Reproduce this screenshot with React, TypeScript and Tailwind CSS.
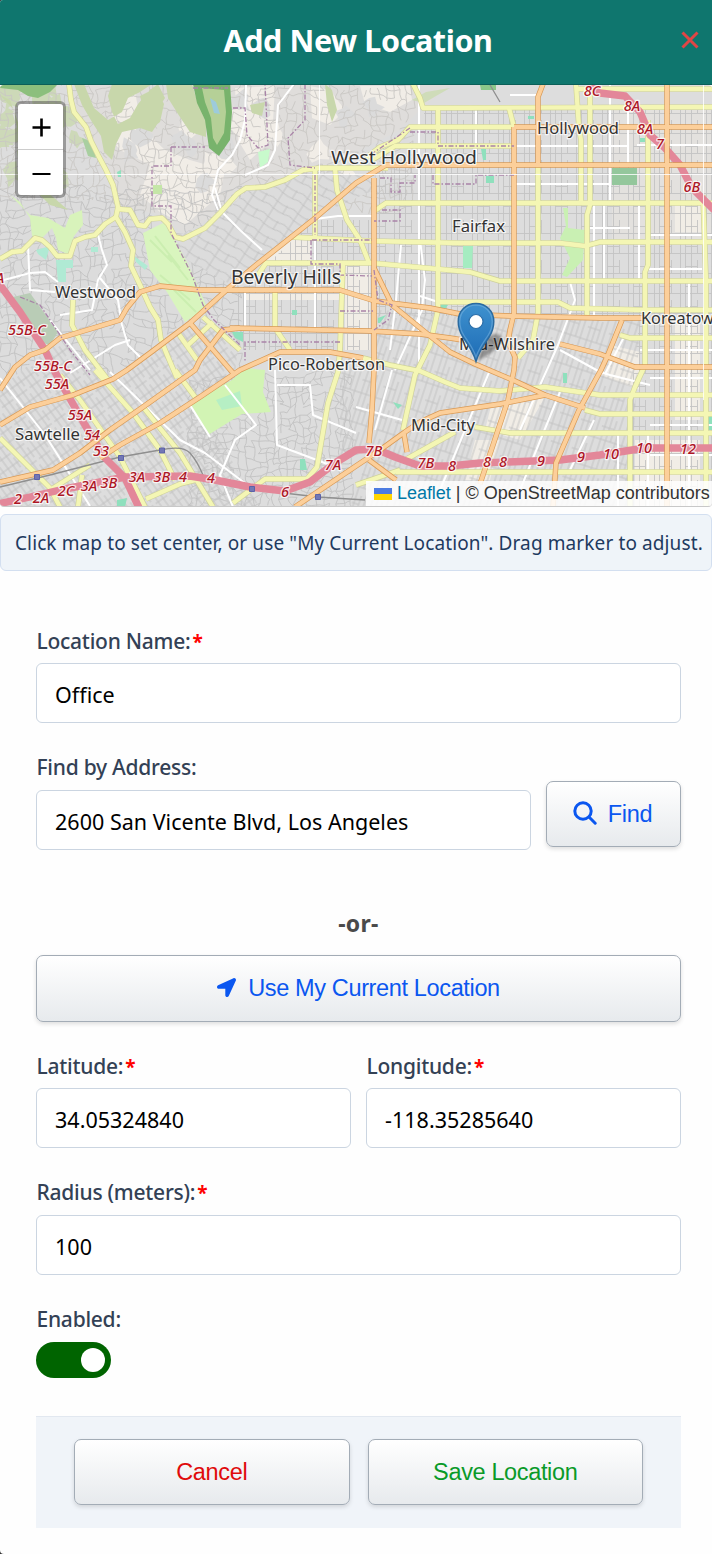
import type { ReactNode } from "react";
import { FaLocationArrow } from "react-icons/fa";

const UI = "font-['Noto_Sans','Open_Sans',sans-serif]";
const ARIAL = "font-['Liberation_Sans',Arial,sans-serif]";

/* ---------- map data ---------- */

function seeded(seed: number) {
  let s = seed;
  return () => {
    s = (s * 16807) % 2147483647;
    return s / 2147483647;
  };
}

// Irregular street mesh: a jittered grid with some of its edges left out.
function mesh(seed: number, x0: number, y0: number, w: number, h: number, cell: number, keep: number) {
  const rnd = seeded(seed);
  const cols = Math.ceil(w / cell) + 1;
  const rows = Math.ceil(h / cell) + 1;
  const pts: [number, number][][] = [];
  for (let r = 0; r < rows; r++) {
    const row: [number, number][] = [];
    for (let c = 0; c < cols; c++) {
      const bend = Math.sin(c * 0.55 + r * 0.2) * cell * 0.5;
      row.push([x0 + c * cell + (rnd() - 0.5) * cell * 0.8, y0 + r * cell + bend + (rnd() - 0.5) * cell * 0.8]);
    }
    pts.push(row);
  }
  let d = "";
  const edge = (a: [number, number], b: [number, number]) => {
    const mx = (a[0] + b[0]) / 2 + (rnd() - 0.5) * cell * 0.6;
    const my = (a[1] + b[1]) / 2 + (rnd() - 0.5) * cell * 0.6;
    d += `M${a[0].toFixed(1)} ${a[1].toFixed(1)}Q${mx.toFixed(1)} ${my.toFixed(1)} ${b[0].toFixed(1)} ${b[1].toFixed(1)}`;
  };
  for (let r = 0; r < rows; r++) {
    for (let c = 0; c < cols; c++) {
      if (c + 1 < cols && rnd() < keep) edge(pts[r][c], pts[r][c + 1]);
      if (r + 1 < rows && rnd() < keep) edge(pts[r][c], pts[r + 1][c]);
    }
  }
  return d;
}

function blobs(seed: number, count: number, x0: number, y0: number, w: number, h: number, r: number) {
  const rnd = seeded(seed);
  let d = "";
  for (let i = 0; i < count; i++) {
    const x = x0 + rnd() * w;
    const y = y0 + rnd() * h;
    for (let k = 0; k < 9; k++) {
      const a = (k / 9) * 6.28;
      const q = r * (0.4 + rnd());
      d += `${k ? "L" : "M"}${(x + Math.cos(a) * q).toFixed(1)} ${(y + Math.sin(a) * q * 1.2).toFixed(1)}`;
    }
    d += "Z";
  }
  return d;
}

const HILL_LINES = mesh(77, 0, 84, 410, 120, 7, 0.62);
const WEST_LINES = mesh(191, 0, 190, 240, 190, 8, 0.8);
const LOW_LINES = mesh(53, 190, 375, 160, 130, 7, 0.8);

const YELLOW = [
  "M69 84L71 100L74 112L86 127L91 141L98 155L106 170L113 185L118 207L116 217L125 232L133 250L131 266L140 285L150 307L158 320L161 340L168 357L177 378",
  "M0 259L12 252L22 251L35 238L42 240L50 247L57 256L70 256L75 241L85 237L95 235L105 224L116 217",
  "M118 209L130 210L138 225L145 226L150 219L162 218L168 224L175 237L183 239L205 228L220 213L237 194L246 188L265 187L285 180L303 170L320 168L388 168",
  "M413 84L420 98L423 108L712 107",
  "M438 108V310L430 345L415 375L403 430",
  "M366 158L380 147L398 140L410 127H514",
  "M372 160L395 146H514",
  "M509 108L514 127",
  "M576 84L579 128L581 140V203",
  "M590 84V205L587 215V315",
  "M576 89H625L712 89",
  "M538 165V313L533 340L518 358",
  "M648 120V265L645 272V365L635 387L630 400V507",
  "M703 195L706 280V507",
  "M373 212L386 203H712",
  "M290 237L372 241L460 243H560L585 246L600 242H712",
  "M258 275L266 263L372 263L470 272L500 281H712",
  "M438 302H558L570 308L645 310H712",
  "M620 335L630 338H712",
  "M275 290V328L290 350",
  "M343 262L340 350L338 372L328 403L317 467L307 479H265L233 503",
  "M315 168V238",
  "M335 168L337 190L347 220L360 240L369 263",
  "M363 358L390 365L420 371L445 382L460 388L500 391L545 387L600 395H712",
  "M585 410L600 414H712",
  "M475 427L510 433H712",
  "M396 472H712",
  "M405 460L455 432",
  "M356 485L400 470",
  "M60 375L80 400L120 457L145 507",
  "M95 370L133 413L160 450L175 480",
  "M143 407L180 453L213 507",
  "M0 438L50 488L60 507",
  "M90 465L50 490",
  "M82 475L78 507",
  "M146 499L180 484L200 479",
  "M73 300L72 325L85 350L108 380",
  "M178 333L197 360",
  "M187 346L213 322",
  "M203 317L240 350",
  "M175 370L195 397",
];

const ORANGE = [
  "M712 165H386L356 183L314 219L256 265L231 286L190 323L150 353L127 370L113 379L73 395L30 407L0 425",
  "M0 390L15 367L30 355L45 350L60 338L120 320L127 308L140 292L160 286L200 290H340L375 301L430 308L460 314L510 316L600 318H648",
  "M190 323L233 373",
  "M230 328L370 331L420 334L450 338L475 342",
  "M240 328L223 330L213 343L200 360L195 370L143 407L110 430L80 453L53 470L0 482",
  "M363 358L330 352H280L240 370L200 397L160 423L120 445L100 458",
  "M374 178V370L372 410L369 443",
  "M374 268L392 305L430 336L450 352L475 364L515 381L545 395L585 408",
  "M369 460L396 480",
  "M545 395L500 404L440 413L420 422L405 432L380 450L356 466L295 507",
  "M404 434L407 452",
  "M514 127V313L510 330L508 342L515 357L514 370L508 400L489 457L480 484",
  "M560 344L600 354L635 367H712",
  "M622 320L607 357L601 370L579 410L556 463L553 507",
  "M543 84L538 97V165",
  "M514 127H712",
  "M667 84V507",
];

const WHITE = [
  "M246 84L245 120L240 140L232 155L218 170L212 195L218 210",
  "M294 84L278 105L275 150L268 165L245 175",
  "M215 188L222 212L240 230L262 250",
  "M28 245L30 290L55 292",
  "M98 235L102 250L107 265L98 280L92 310L60 315",
  "M100 278L118 300L122 325L128 345L140 357",
  "M0 281L30 273L45 272L58 282",
  "M50 320L90 370",
  "M70 373L115 345L130 340",
  "M0 378L45 435L90 506",
  "M110 372L180 440L205 453L250 487",
  "M190 405L210 437",
  "M225 385L256 425L235 440L220 475L233 507",
  "M275 370L277 445L330 465",
  "M277 385H310L313 415L356 433",
  "M315 240V330",
  "M245 290V328",
  "M315 219L338 216H373",
  "M419 84V365",
  "M401 245L396 300L390 350",
  "M420 240L425 280L422 310L395 370",
  "M420 296L438 302",
  "M476 108V165",
  "M510 95H540",
  "M610 84V200",
  "M628 95V165",
  "M514 146H627",
  "M516 184H610",
  "M637 145H712",
  "M594 205V315",
  "M604 205V280",
  "M639 205V280",
  "M590 228H630",
  "M650 235H712",
  "M648 269H702",
  "M689 282V507",
  "M570 282L575 300L558 345L520 430",
  "M640 350H712",
  "M560 350L600 372L610 375L650 385",
  "M625 335L605 374",
  "M356 407L402 420",
  "M392 370L375 430",
  "M490 370L440 490",
  "M560 392L520 490",
  "M594 420L570 470",
  "M650 378H712",
  "M650 425H712M650 455H712",
  "M618 434V507M648 434V507",
];

const PURPLE = [
  "M171 147V166H152V206H171V233L182 255L192 275L203 305L214 320L240 345",
  "M171 147H205",
  "M233 108H245L247 135L258 148L268 145L265 84",
  "M305 84V120L288 138L290 165L315 168",
  "M315 175V235",
  "M311 240V264H340V275L372 276",
  "M312 240L372 240",
  "M380 178H391V192H400V183H415V175M433 175V184H476V175H514",
  "M410 128L370 155",
  "M410 132H438V146H514",
  "M374 270L378 300L392 305L388 320L374 330",
  "M340 311H373M340 342H245V362",
  "M382 210H400V221H374",
  "M20 297L40 305L70 350L90 375",
  "M193 88H228",
];

const RED = [
  "M-3 281L20 312L45 350L55 372L65 390L85 425L105 458L125 478L140 510",
  "M-2 504L30 497L60 490L100 482L125 477L190 476L215 480L250 487L285 491L310 482L335 463L356 450L376 449L395 457L420 466L450 466L480 463L560 460L600 455L645 448H714",
  "M588 84L600 93L625 96L640 112L650 135L665 148L680 165L692 188L714 210",
];

const PLACES: [string, number, number, number, number][] = [
  ["West Hollywood", 331, 164, 146, 18],
  ["Hollywood", 537, 134, 82, 16.5],
  ["Fairfax", 452, 232, 53, 16.5],
  ["Beverly Hills", 231, 284, 110, 19],
  ["Westwood", 55, 298, 81, 16.5],
  ["Pico-Robertson", 268, 370, 117, 16.5],
  ["Mid-City", 411, 431, 64, 16.5],
  ["Sawtelle", 15, 440, 65, 16.5],
  ["Mid-Wilshire", 459, 350, 96, 16.5],
  ["Koreatown", 641, 324, 83, 16.5],
];

const EXITS: [string, number, number][] = [
  ["55B-C", 27, 335], ["55B-C", 53, 371], ["55A", 57, 389], ["55A", 80, 420], ["54", 92, 440], ["53", 101, 456],
  ["2", 18, 504], ["2A", 41, 503], ["2C", 66, 496], ["3A", 89, 491], ["3B", 109, 488], ["3A", 137, 482], ["3B", 162, 482],
  ["4", 183, 482], ["4", 211, 483], ["6", 285, 497], ["7A", 333, 470], ["7B", 374, 456], ["7B", 426, 468], ["8", 452, 471],
  ["8", 487, 467], ["8", 503, 467], ["9", 541, 466], ["9", 581, 462], ["10", 611, 459], ["10", 644, 453], ["12", 688, 454],
  ["8C", 592, 96], ["8A", 632, 111], ["8A", 645, 134], ["7", 660, 149], ["6B", 692, 192], ["A", 0, 283],
];

const GREENS_HILL =
  "M74 84L82 105L92 122L101 136L104 152L112 160L116 144L122 132L140 128L152 132L160 120L156 112L165 98L158 84L150 90L138 104L130 118L118 124L112 112L108 96L112 84ZM84 84H152L140 92L128 98L122 112L108 120L94 108ZM140 96L144 112L140 122L150 130L160 122L164 104L156 88ZM166 84L168 98L178 114L190 132L206 137L206 122L198 104L192 84ZM0 95L14 110L18 135L28 165L35 190L50 205L68 210L45 190L32 160L20 128L10 100Z";

function MapDrawing() {
  return (
    <svg className="block h-[422px] w-full" viewBox="0 85 712 422" preserveAspectRatio="none" aria-hidden="true">
      <defs>
        <pattern id="gridEast" width="26" height="20" patternUnits="userSpaceOnUse">
          <path d="M4.500 0V20M9.500 0V20M15.500 0V20M21.500 0V13M0 13.500H26M9 6.500H21" stroke="#c3c3c3" strokeWidth="0.9" fill="none" />
        </pattern>
        <pattern id="gridSouth" width="22" height="30" patternUnits="userSpaceOnUse" patternTransform="rotate(18)">
          <path d="M3 0V30M8 0V30M13 0V22M18 0V30M0 9H13M0 22H22" stroke="#c1c1c1" strokeWidth="0.9" fill="none" />
        </pattern>
        <pattern id="gridWest" width="17" height="21" patternUnits="userSpaceOnUse" patternTransform="rotate(-36)">
          <path d="M3 0V21M9 0V21M14 0V12M0 6H17M0 16H14" stroke="#c0c0c0" strokeWidth="0.9" fill="none" />
        </pattern>
        <pattern id="gridHills" width="24" height="18" patternUnits="userSpaceOnUse" patternTransform="rotate(32)">
          <path d="M0 4Q12 8 24 4M0 12Q12 16 24 12M6 0V18M17 4V14" stroke="#c2c2c2" strokeWidth="0.9" fill="none" />
        </pattern>
        <linearGradient id="pin" x1="0" y1="0" x2="0" y2="1">
          <stop offset="0" stopColor="#3f92cf" />
          <stop offset="1" stopColor="#1d6bb5" />
        </linearGradient>
        <filter id="soft" x="-50%" y="-50%" width="200%" height="200%">
          <feGaussianBlur stdDeviation="1.8" />
        </filter>
      </defs>

      <rect x="0" y="85" width="712" height="422" fill="#dddddd" />
      <path d="M0 85H450L420 110L400 130L330 165L230 205L185 235L160 215L118 205L105 165L72 110V85Z" fill="#dfdddb" />
      <path d="M118 100L135 92L142 128L165 150L190 160L225 170L220 195L185 225L160 212L140 195L150 165L120 150L112 140ZM235 88L275 86L272 140L250 160L238 140ZM310 86L330 90L345 110L330 125L312 118ZM360 86H410L412 100L390 112L365 104Z" fill="#f1ede7" />
      <path d={blobs(9, 9, 120, 90, 230, 90, 10)} fill="#f1ede7" />
      <path d={blobs(27, 16, 130, 95, 270, 100, 9)} fill="#dbdbdb" />
      <path d={blobs(4, 26, 0, 90, 76, 90, 9)} fill="#cdd9b8" />
      <path d="M385 108H712V240H612V108Z" fill="#ebe6df" opacity="0.45" />
      <path d="M280 240H311V263H262ZM245 292H340V300H245ZM345 264H370V350H345ZM492 402L545 397L520 440L485 430ZM610 345L640 352V390L600 375ZM675 320H700V420H675ZM675 205H702V232H675ZM475 440L500 440L490 480L465 480ZM635 440H700V507H635Z" fill="#f1ede6" />

      <path d={HILL_LINES} stroke="#c9c7c4" strokeWidth="0.9" fill="none" />
      <path d="M0 200H110L120 210L170 240L185 240L232 205V290L190 323L110 380L60 345L0 350Z" fill="#dcdcdc" />
      <path d={WEST_LINES} stroke="#c2c2c2" strokeWidth="0.9" fill="none" />
      <path d="M374 190L314 217L232 285L190 262L170 240L225 212L246 192L300 175H374Z" fill="#dcdcdc" />
      <path d="M374 190L314 217L232 285L190 262L170 240L225 212L246 192L300 175H374Z" fill="url(#gridHills)" />
      <path d="M374 168H712V316H374ZM424 110H712V168H424ZM232 290H374V350H232ZM314 220H374V290H240Z" fill="url(#gridEast)" />
      <path d="M640 318H712V507H630V400Z" fill="url(#gridEast)" />
      <path d="M374 310L640 320L630 507H350L374 440ZM340 355L374 365V450L340 460Z" fill="url(#gridSouth)" />
      <path d="M0 388L60 340L110 382L150 355L190 325L240 330L235 372L195 400L260 507H0Z" fill="#dddddd" />
      <path d="M0 388L60 340L110 382L150 355L190 325L240 330L235 372L195 400L260 507H0Z" fill="url(#gridWest)" />
      <path d={LOW_LINES} stroke="#c2c2c2" strokeWidth="0.9" fill="none" />

      <path d={GREENS_HILL} fill="#c8d7ab" />
      <path d="M325 84L332 90L337 110L332 122L327 105ZM250 105L265 102L262 116L252 113Z" fill="#c8d7ab" />
      <path d="M0 84H58L50 92L38 98L28 96L18 90L0 88Z" fill="#8cbf7d" />
      <path d="M82 138L92 142L96 158L88 156Z" fill="#a9cfa0" />
      <path d="M193 84L230 84L232 112L230 140L219 156L209 148L205 120L197 103Z" fill="#78b36c" />
      <path d="M202 88L224 90L226 112L224 133L217 145L213 138L211 118L205 102Z" fill="#b5d097" />
      <path d="M210 98L216 102L220 114L214 113Z" fill="#9dcbdb" />
      <path d="M258 152L270 149L268 162L260 168Z" fill="#c8facc" />
      <path d="M10 195L20 202L30 218L32 236L42 238L52 228L56 238L58 250L68 254L74 236L83 225L82 210L70 215L65 228L48 218L30 215Z" fill="#d8f3bb" />
      <path d="M143 233L165 222L175 240L187 262L207 307L185 322L167 292L150 270Z" fill="#d9f5be" />
      <path d="M150 240L172 262M155 236L180 268M160 275L190 300M168 255L188 280M174 290L196 312" stroke="#cbeeb0" strokeWidth="2" />
      <path d="M190 403L232 380L245 368L265 370L263 392L271 412L242 414L208 435Z" fill="#d2f4b4" />
      <path d="M216 400L240 391L242 406L222 410Z" fill="#b6efc4" />
      <path d="M13 297L30 293L58 332L50 345L40 342Z" fill="#b9ccb6" />
      <path d="M563 208H568V228L585 230L583 260L567 277L562 275L570 258L560 238L566 226Z" fill="#c9f0b3" />
      <path d="M463 246H473L472 268H463Z" fill="#a5ecc1" />
      <path d="M36 250L50 246L46 260L38 254ZM56 260H73V268H66V282H58ZM134 256L148 266L145 270L136 262ZM91 247H98V252H91Z" fill="#b0ead4" />
      <path d="M153 185H162V194H153Z" fill="#c5e6a8" />
      <path d="M612 168H637V185H612Z" fill="#94c79c" />
      <path d="M486 176H494V183H486ZM481 149H486V160H483ZM528 116H534V119H528ZM640 138H645V142H640ZM440 300L448 305L445 309L437 309ZM292 310H297V315H292ZM232 332H243V342L235 338ZM378 318L386 315L380 323H378ZM117 172L121 170V177H118ZM393 402L402 405L398 409ZM563 373H567V383H563ZM117 500L127 498L125 507H117ZM300 459H305L307 470H300ZM706 415H712V430H706Z" fill="#8fe0bd" />
      <path d="M480 85H496V90H481Z" fill="#8cc78a" />
      <path d="M412 100L426 92L450 88L436 96L424 103Z" fill="#cbdcb0" opacity="0.8" />

      <g fill="none" stroke="#ffffff" strokeLinejoin="round" strokeWidth="2">
        {WHITE.map((d) => <path key={d} d={d} />)}
      </g>
      <g fill="none" stroke="#cfd29a" strokeLinejoin="round" strokeWidth="5.600">
        {YELLOW.map((d) => <path key={d} d={d} />)}
      </g>
      <g fill="none" stroke="#f4f6b4" strokeLinejoin="round" strokeWidth="4.300">
        {YELLOW.map((d) => <path key={d} d={d} />)}
      </g>
      <path d="M0 487L50 475L120 457L160 450Q183 445 190 453T203 475Q212 484 250 489L318 497L365 500M490 85L500 102" stroke="#8f8f8f" strokeWidth="1.300" fill="none" />
      <g fill="none" stroke="#e38799" strokeLinejoin="round" strokeWidth="7.400">
        {RED.map((d) => <path key={d} d={d} />)}
      </g>
      <g fill="none" stroke="#d99a56" strokeLinejoin="round" strokeWidth="5.400">
        {ORANGE.map((d) => <path key={d} d={d} />)}
      </g>
      <g fill="none" stroke="#fccf9a" strokeLinejoin="round" strokeWidth="4">
        {ORANGE.map((d) => <path key={d} d={d} />)}
      </g>
      <g fill="none" stroke="#a983a8" strokeWidth="1.300" strokeDasharray="5 2 1.5 2">
        {PURPLE.map((d) => <path key={d} d={d} />)}
      </g>
      <path d="M34.500 474.500h5v5h-5zM118.500 455.500h5v5h-5zM159.500 448h5v5h-5zM249.500 486.500h5v5h-5zM315.500 494.500h5v5h-5z" fill="#7277b5" stroke="#5c62a8" />

      <g className="font-['Noto_Sans',sans-serif]" fill="#333333" stroke="#ffffff" strokeOpacity="0.75" strokeWidth="2.500" strokeLinejoin="round" paintOrder="stroke">
        {PLACES.map(([name, x, y, w, size]) => (
          <text key={name} x={x} y={y} fontSize={size} textLength={w} lengthAdjust="spacingAndGlyphs">{name}</text>
        ))}
      </g>
      <g className="font-['Noto_Sans',sans-serif] italic" fill="#ad1626" stroke="#ffffff" strokeOpacity="0.8" strokeWidth="2.500" strokeLinejoin="round" paintOrder="stroke" fontSize="14.500" fontWeight="500" textAnchor="middle">
        {EXITS.map(([name, x, y]) => (
          <text key={`${name}-${x}`} x={x} y={y}>{name}</text>
        ))}
      </g>

      <path d="M0 174.500H712M319.500 85V174M703.500 85V400" stroke="#ffffff" strokeWidth="0.900" opacity="0.9" />

      <path d="M477 361L486 338Q498 330 502 338Q500 350 477 361Z" fill="#000000" opacity="0.35" filter="url(#soft)" />
      <path d="M476 361.500C473 351 468 345 462.500 336.500C459.500 331.500 458.200 327 458.200 321.500C458.200 311 466 303.500 476 303.500C486 303.500 493.800 311 493.800 321.500C493.800 327 492.500 331.500 489.500 336.500C484 345 479 351 476 361.500Z" fill="url(#pin)" stroke="#2a6a9f" strokeWidth="1.400" />
      <path d="M476 357C473 348 469 343 464 335.500C461 331 459.800 326.500 459.800 321.500C459.800 312 467 305.100 476 305.100C485 305.100 492.200 312 492.200 321.500C492.200 326.500 491 331 488 335.500C483 343 479 348 476 357Z" fill="none" stroke="#7fb7e2" strokeOpacity="0.5" strokeWidth="1.300" />
      <circle cx="476" cy="321.500" r="7" fill="#ffffff" stroke="#2b6ea8" strokeWidth="1.200" />
    </svg>
  );
}

/* ---------- form parts ---------- */

function Label({ children, required }: { children: ReactNode; required?: boolean }) {
  return (
    <div className={`${UI} flex h-[30px] items-center whitespace-pre pl-[0.5px] text-[21px] font-medium tracking-[-0.25px] text-[#334155]`}>
      {children}
      {required && <span className="ml-[2px] text-[19px] font-bold text-[#ff0000]">*</span>}
    </div>
  );
}

function Field({ value }: { value: string }) {
  return (
    <div className={`${UI} flex h-[60px] w-full items-center whitespace-pre rounded-[6px] border border-[#cbd5e1] bg-white pl-[18px] pt-[5px] text-[21.5px] tracking-[0.02px] text-black`}>
      {value}
    </div>
  );
}

function Button({ className, children }: { className: string; children: ReactNode }) {
  return (
    <button
      type="button"
      className={`${ARIAL} flex items-center justify-center whitespace-nowrap rounded-[7px] border border-[#a3acb6] bg-linear-to-b from-white to-[#e7eaed] text-[23.5px] tracking-[-0.36px] shadow-[0_2px_4px_rgba(0,0,0,0.13)] ${className}`}
    >
      {children}
    </button>
  );
}

export default function App() {
  return (
    <div className="w-full bg-[#333333]">
      <div className="flex h-[1554px] flex-col overflow-hidden rounded-tl-[3px] rounded-bl-[4px] bg-[#fefefe]">
        <header className="relative flex h-[85px] shrink-0 items-center justify-center border-b border-[#0b5f58] bg-[#0f766e] pb-[2px] pl-1">
          <h1 className={`${UI} text-[30.5px] font-bold tracking-[-0.4px] text-white`}>Add New Location</h1>
          <svg className="absolute top-[31px] right-[13px] size-[18px]" viewBox="0 0 18 18" aria-label="Close">
            <path d="M1.500 1.500L16.500 16.500M16.500 1.500L1.500 16.500" stroke="#e04545" strokeWidth="3" />
          </svg>
        </header>

        <div className="relative h-[422px] shrink-0 overflow-hidden rounded-[4px] border-b border-[#c8c8c8]">
          <MapDrawing />
          <div className="absolute top-[16px] left-[15px] flex w-[51px] flex-col rounded-[6px] border-[3px] border-black/30 bg-white bg-clip-padding">
            <div className="flex h-[46px] items-center justify-center border-b border-[#cccccc] pt-px pl-px">
              <svg className="size-[19px]" viewBox="0 0 19 19"><path d="M0.500 9.500H18.500M9.500 0.500V18.500" stroke="#000" strokeWidth="2.600" /></svg>
            </div>
            <div className="flex h-[45px] items-center justify-center pt-1 pl-px">
              <svg className="size-[19px]" viewBox="0 0 19 19"><path d="M0.500 9H18.500" stroke="#000" strokeWidth="2" /></svg>
            </div>
          </div>
          <div className={`${ARIAL} absolute right-0 bottom-0 flex h-[25px] w-[346px] items-center whitespace-pre bg-white/85 pl-2 text-[18px] text-[#333333]`}>
            <svg className="mr-[5px] h-3 w-[18px] shrink-0" viewBox="0 0 18 12">
              <path d="M0 0H18V6H0Z" fill="#4c7be1" />
              <path d="M0 6H18V12H0Z" fill="#ffd500" />
            </svg>
            <span className="tracking-[-0.05px] text-[#0078a8]">Leaflet</span>
            <span> | © OpenStreetMap contributors</span>
          </div>
        </div>

        <div className={`${UI} mt-[7px] flex h-[57px] shrink-0 items-center whitespace-pre rounded-[6px] border border-[#d3dff0] bg-[#eff4f9] pt-[2px] pl-[14px] text-[19px] tracking-[0.11px] text-[#1e3a5f]`}>
          Click map to set center, or use "My Current Location". Drag marker to adjust.
        </div>

        <div className="flex flex-col pt-[56px] pr-[31px] pl-[36px]">
          <div className="h-[36px]"><Label required>Location Name:</Label></div>
          <Field value="Office" />

          <div className="mt-[30px] h-[37px]"><Label>Find by Address:</Label></div>
          <div className="flex gap-[15px]">
            <div className="w-[495px]"><Field value="2600 San Vicente Blvd, Los Angeles" /></div>
            <Button className="-mt-[9px] h-[66px] w-[135px] gap-[11px] pt-[2px] pr-[2px] text-[#0b57f0]">
              <svg className="-mt-[5px] size-[24px]" viewBox="0 0 24 24" fill="none" stroke="#0b57f0" strokeLinecap="round">
                <circle cx="10" cy="10" r="8.200" strokeWidth="3" />
                <path d="M16.500 16.500L22.200 22.200" strokeWidth="3" />
              </svg>
              <span>Find</span>
            </Button>
          </div>

          <div className={`${UI} mt-[57px] flex h-[32px] items-center justify-center text-[23px] font-bold tracking-[0.3px] text-[#4a4a4a]`}>-or-</div>
          <Button className="mt-[16px] h-[67px] w-full gap-[12px] text-[#0b57f0]">
            <FaLocationArrow className="-mt-[2px] size-[19px]" />
            <span>Use My Current Location</span>
          </Button>

          <div className="mt-[30px] flex gap-[15px]">
            <div className="flex-1">
              <div className="h-[36px]"><Label required>Latitude:</Label></div>
              <Field value="34.05324840" />
            </div>
            <div className="flex-1">
              <div className="h-[36px]"><Label required>Longitude:</Label></div>
              <Field value="-118.35285640" />
            </div>
          </div>

          <div className="mt-[30px] h-[37px]"><Label required>Radius (meters):</Label></div>
          <Field value="100" />

          <div className="mt-[30px] h-[37px]"><Label>Enabled:</Label></div>
          <div className="flex h-[36px] w-[75px] items-center justify-end rounded-full bg-[#006400] pr-[6px]">
            <div className="size-[24px] rounded-full bg-white" />
          </div>

          <footer className="mt-[38px] flex h-[112px] gap-[18px] border-t border-[#e2e8f0] bg-[#f0f4f9] px-[38px] pt-[22px]">
            <Button className="h-[66px] flex-1 pt-[2px] text-[#e00b0b]">Cancel</Button>
            <Button className="h-[66px] flex-1 pt-[2px] text-[#0a9a28]">Save Location</Button>
          </footer>
        </div>
      </div>
    </div>
  );
}
